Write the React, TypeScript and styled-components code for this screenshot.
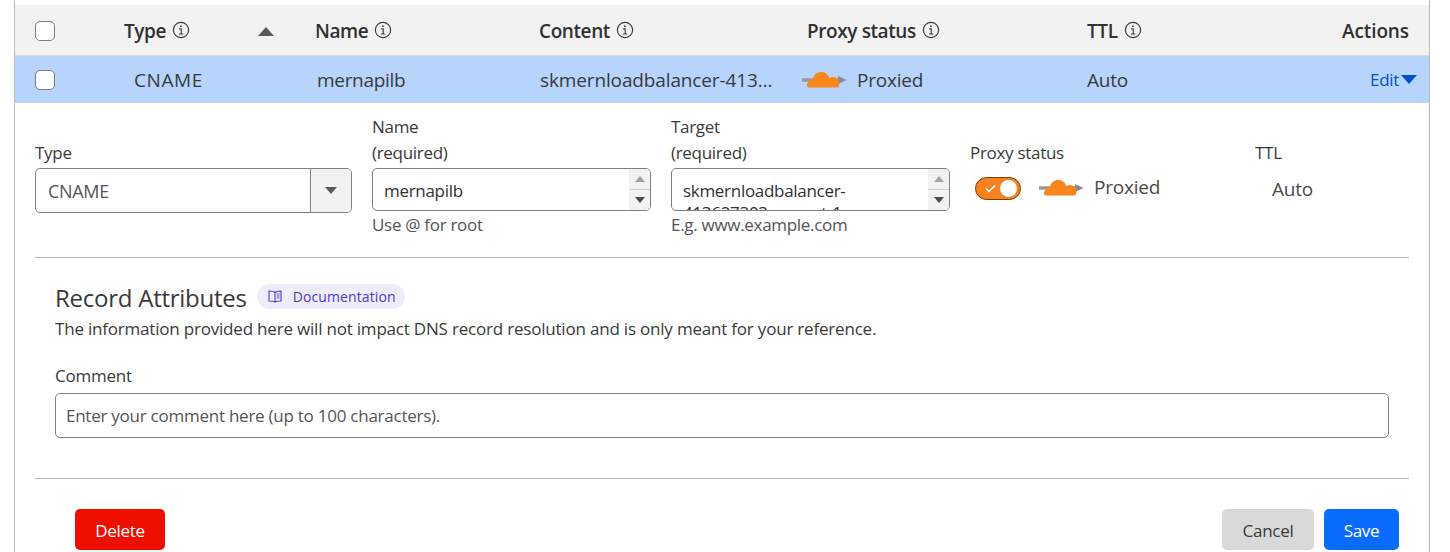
import React from "react";
import styled, { createGlobalStyle } from "styled-components";

const Global = createGlobalStyle`
  html, body { margin: 0; padding: 0; background: #fff; overflow: hidden; }
  body { font-family: "Open Sans", "Noto Sans", sans-serif; color: #313131; font-size: 16px; }
`;
const Page = styled.div`
  width: 1450px; height: 552px; overflow: hidden; padding-top: 5px; box-sizing: border-box; position: relative;
`;
const Frame = styled.div`
  position: absolute; top: 0; bottom: 0; left: 14px; width: 1414px;
  border-left: 1px solid #b9b9b9; border-right: 1px solid #b9b9b9; pointer-events: none;
`;
const Panel = styled.div`margin-left: 15px; width: 1414px;`;
const columns = "89px 135px 56px 224px 268px 280px 1fr";
const HeaderRow = styled.div`
  display: grid; grid-template-columns: ${columns}; align-items: center;
  height: 48px; padding-top: 2px; background: #f2f2f2; border-bottom: 1px solid #d9d9d9; padding-left: 20px; padding-right: 20px;
  font-size: 19px; font-weight: 600; color: #313131; letter-spacing: -0.4px;
`;
const DataRow = styled.div`
  display: grid; grid-template-columns: ${columns}; align-items: center;
  height: 47px; background: #b7d4fd; padding-left: 20px; padding-right: 12px;
  font-size: 19px; color: #3a3a3a; letter-spacing: -0.2px;
`;
const HeadCell = styled.div`display: flex; align-items: center; gap: 6px;`;
const SplitCell = styled.div<{ $plain?: boolean }>`
  display: flex; align-items: center; justify-content: space-between;
  font-weight: ${(p) => (p.$plain ? 400 : 600)};
`;
const RightCell = styled.div`text-align: right; letter-spacing: -0.1px;`;
const Box = styled.span`
  display: block; width: 20px; height: 20px; border: 1px solid #7d7d7d; border-radius: 5px; background: #fff; box-sizing: border-box;
`;
const Cell = styled.div<{ $pad?: number; $track?: number }>`
  padding-left: ${(p) => p.$pad ?? 0}px; white-space: nowrap; min-width: 0; overflow: hidden;
  letter-spacing: ${(p) => p.$track ?? -0.2}px;
`;
const ProxyCell = styled.div`display: flex; align-items: center; gap: 10px; margin-left: -5px;`;
const EditLink = styled.span`
  display: inline-flex; align-items: center; justify-content: flex-end; gap: 2px; color: #0051c3; font-size: 17px; letter-spacing: -0.3px;
`;
const SortArrow = styled.span`
  display: block; width: 0; height: 0; border-left: 8px solid transparent; border-right: 8px solid transparent;
  border-bottom: 9px solid #595959; margin-left: -1px;
`;
const EditArrow = styled.span`
  display: block; width: 0; height: 0; border-left: 8px solid transparent; border-right: 8px solid transparent;
  border-top: 9px solid #0051c3;
`;
const FormRow = styled.div`
  display: grid; grid-template-columns: 317px 279px 279px 265px 1fr; column-gap: 20px;
  padding: 11px 20px 0; height: 154px; box-sizing: border-box; align-items: start;
`;
const Field = styled.div`display: flex; flex-direction: column; width: 100%;`;
const Label = styled.div`
  font-size: 17px; line-height: 26px; color: #3a3a3a; letter-spacing: -0.3px;
`;
const TopSpacer = styled.div`height: 26px;`;
const SelectBox = styled.div`
  height: 45px; border: 1px solid #808080; border-radius: 5px; display: flex; box-sizing: border-box; overflow: hidden;
  margin-top: 2px;
`;
const SelectValue = styled.div`
  flex: 1; padding-left: 12px; display: flex; align-items: center; font-size: 18px; color: #555; letter-spacing: -0.3px;
`;
const SelectBtn = styled.div`
  width: 40px; background: #f2f2f2; border-left: 1px solid #808080; display: flex; align-items: center; justify-content: center;
`;
const DownArrow = styled.span`
  display: block; width: 0; height: 0; border-left: 6px solid transparent; border-right: 6px solid transparent;
  border-top: 7px solid #595959;
`;
const SpinUp = styled.span`
  display: block; width: 0; height: 0; border-left: 5px solid transparent; border-right: 5px solid transparent;
  border-bottom: 6px solid #a3a3a3;
`;
const SpinDown = styled.span`
  display: block; width: 0; height: 0; border-left: 5px solid transparent; border-right: 5px solid transparent;
  border-top: 6px solid #4a4a4a;
`;
const AreaBox = styled.div`
  height: 43px; border: 1px solid #808080; border-radius: 5px; display: flex; box-sizing: border-box; overflow: hidden;
  margin-top: 2px;
`;
const AreaText = styled.div`
  flex: 1; padding: 11px 10px 0 11px; font-size: 17px; line-height: 22px; color: #313131; overflow: hidden; letter-spacing: -0.3px;
`;
const Spinner = styled.div`
  width: 21px; background: #f2f2f2; display: flex; flex-direction: column;
`;
const SpinPart = styled.div<{ $top?: boolean }>`
  flex: 1; display: flex; align-items: center; justify-content: center;
  border-bottom: ${(p) => (p.$top ? "1px solid #cfcfcf" : "none")};
`;
const Hint = styled.div`
  font-size: 17px; line-height: 27px; color: #555; letter-spacing: -0.3px;
`;
const ToggleRow = styled.div`
  display: flex; align-items: center; gap: 18px; margin: 8px 0 0 5px; font-size: 19px; color: #4a4a4a;
`;
const ToggleGroup = styled.div`display: flex; align-items: center; gap: 10px; letter-spacing: -0.2px; margin-bottom: 2px;`;
const Toggle = styled.div`
  width: 46px; height: 23px; background: #f6821f; border: 1px solid #7a3c06; border-radius: 12px; box-sizing: border-box;
  display: flex; align-items: center; justify-content: space-between; padding: 0 3px 0 9px;
`;
const Knob = styled.span`display: block; width: 17px; height: 17px; border-radius: 50%; background: #fff;`;
const TtlValue = styled.div`font-size: 19px; line-height: 26px; color: #4a4a4a; padding-left: 17px; padding-top: 10px; letter-spacing: -0.2px;`;
const Divider = styled.hr`
  border: 0; border-top: 1px solid #b9b9b9; margin: 0 20px; height: 0;
`;
const Attributes = styled.section`padding: 26px 40px 0; height: 220px; box-sizing: border-box;`;
const TitleRow = styled.div`display: flex; align-items: center; gap: 10px; height: 27px;`;
const Title = styled.h3`
  margin: 0; font-size: 24px; font-weight: 400; color: #3a3a3a; letter-spacing: -0.25px;
`;
const Badge = styled.span`
  display: inline-flex; align-items: center; gap: 11px; height: 25px; width: 148px; box-sizing: border-box; padding-left: 11px;
  margin-bottom: 2px;
  background: #efedfc; border-radius: 13px; color: #4a3cc0; font-size: 14px; letter-spacing: 0.1px;
`;
const Paragraph = styled.p`
  margin: 6px 0 0; font-size: 17px; line-height: 24px; color: #3a3a3a; letter-spacing: -0.2px; white-space: nowrap;
`;
const CommentLabel = styled.div`
  margin-top: 23px; font-size: 17px; line-height: 24px; color: #3a3a3a; letter-spacing: -0.25px;
`;
const CommentInput = styled.div`
  margin-top: 5px; height: 45px; border: 1px solid #808080; border-radius: 5px; box-sizing: border-box;
  display: flex; align-items: center; padding-left: 10px; font-size: 17px; color: #555; letter-spacing: -0.25px;
`;
const Footer = styled.div`
  display: flex; justify-content: space-between; padding: 30px 30px 0 60px;
`;
const FooterRight = styled.div`display: flex; gap: 10px;`;
const Button = styled.button<{ $bg: string; $fg: string; $w: number }>`
  width: ${(p) => p.$w}px; height: 41px; border: 0; border-radius: 5px; background: ${(p) => p.$bg}; color: ${(p) => p.$fg};
  font-family: inherit; font-size: 17px; letter-spacing: -0.3px; padding: 2px 0 0;
`;
const IconSlot = styled.span`display: flex; margin-top: -3px;`;

const InfoIcon = () => (
  <IconSlot>
    <svg width="18" height="18" viewBox="0 0 16 16" fill="none" stroke="#3a3a3a">
      <circle cx="8" cy="8" r="6.8" strokeWidth="1" />
      <path d="M6.4 7h1.8v4.4M6.2 11.5h3.8" strokeWidth="1" />
      <circle cx="7.9" cy="4.6" r="0.8" fill="#3a3a3a" stroke="none" />
    </svg>
  </IconSlot>
);
const Cloud = () => (
  <svg width="45" height="17" viewBox="0 0 45 17">
    <path d="M0 9h38" stroke="#9a9a9a" strokeWidth="3.5" />
    <path d="M36 5l8.500 4-8.500 4z" fill="#8c8c8c" />
    <path d="M6.500 16.500A3 3 0 0 1 6 11.500 4 4 0 0 1 10.500 9.500 8.700 8.700 0 0 1 27.500 7 6.500 6.500 0 0 1 36 16.500Z" fill="#f9861c" />
  </svg>
);
const BookIcon = () => (
  <svg width="14" height="13" viewBox="0 0 14 13" fill="none" stroke="#4a3cc0" strokeWidth="1.1">
    <path d="M7 2.500C6 1.500 4 1 1 1v10c3 0 5 .2 6 1 1-.8 3-1 6-1V1c-3 0-5 .5-6 1.500zM7 2.500V12" />
    <path d="M8.800 4h2.700M8.800 6h2.700M8.800 8h2.700" strokeWidth="0.9" />
  </svg>
);
const Check = () => (
  <svg width="11" height="9" viewBox="0 0 11 9" fill="none" stroke="#fff" strokeWidth="1.4">
    <path d="M1 4.500l3 3 6-6" />
  </svg>
);

function Spin() {
  return (
    <Spinner>
      <SpinPart $top><SpinUp /></SpinPart>
      <SpinPart><SpinDown /></SpinPart>
    </Spinner>
  );
}

export default function App() {
  return (
    <Page>
      <Global />
      <Frame />
      <Panel>
        <HeaderRow>
          <Box />
          <HeadCell>Type <InfoIcon /></HeadCell>
          <SortArrow />
          <HeadCell>Name <InfoIcon /></HeadCell>
          <HeadCell>Content <InfoIcon /></HeadCell>
          <HeadCell>Proxy status <InfoIcon /></HeadCell>
          <SplitCell>
            <HeadCell>TTL <InfoIcon /></HeadCell>
            <RightCell>Actions</RightCell>
          </SplitCell>
        </HeaderRow>
        <DataRow>
          <Box />
          <Cell $pad={10} $track={0.6}>CNAME</Cell>
          <span />
          <Cell $pad={2} $track={-0.3}>mernapilb</Cell>
          <Cell $pad={1} $track={-0.13}>skmernloadbalancer-413…</Cell>
          <ProxyCell><Cloud />Proxied</ProxyCell>
          <SplitCell $plain>
            <span>Auto</span>
            <EditLink>Edit<EditArrow /></EditLink>
          </SplitCell>
        </DataRow>
        <FormRow>
          <Field>
            <TopSpacer />
            <Label>Type</Label>
            <SelectBox>
              <SelectValue>CNAME</SelectValue>
              <SelectBtn><DownArrow /></SelectBtn>
            </SelectBox>
          </Field>
          <Field>
            <Label>Name</Label>
            <Label>(required)</Label>
            <AreaBox>
              <AreaText>mernapilb</AreaText>
              <Spin />
            </AreaBox>
            <Hint>Use @ for root</Hint>
          </Field>
          <Field>
            <Label>Target</Label>
            <Label>(required)</Label>
            <AreaBox>
              <AreaText>skmernloadbalancer-413627303.us-east-1</AreaText>
              <Spin />
            </AreaBox>
            <Hint>E.g. www.example.com</Hint>
          </Field>
          <Field>
            <TopSpacer />
            <Label>Proxy status</Label>
            <ToggleRow>
              <Toggle><Check /><Knob /></Toggle>
              <ToggleGroup><Cloud />Proxied</ToggleGroup>
            </ToggleRow>
          </Field>
          <Field>
            <TopSpacer />
            <Label>TTL</Label>
            <TtlValue>Auto</TtlValue>
          </Field>
        </FormRow>
        <Divider />
        <Attributes>
          <TitleRow>
            <Title>Record Attributes</Title>
            <Badge><BookIcon />Documentation</Badge>
          </TitleRow>
          <Paragraph>The information provided here will not impact DNS record resolution and is only meant for your reference.</Paragraph>
          <CommentLabel>Comment</CommentLabel>
          <CommentInput>Enter your comment here (up to 100 characters).</CommentInput>
        </Attributes>
        <Divider />
        <Footer>
          <Button $bg="#ee0f00" $fg="#fff" $w={90}>Delete</Button>
          <FooterRight>
            <Button $bg="#d9d9d9" $fg="#3a3a3a" $w={92}>Cancel</Button>
            <Button $bg="#0a6cff" $fg="#fff" $w={75}>Save</Button>
          </FooterRight>
        </Footer>
      </Panel>
    </Page>
  );
}
